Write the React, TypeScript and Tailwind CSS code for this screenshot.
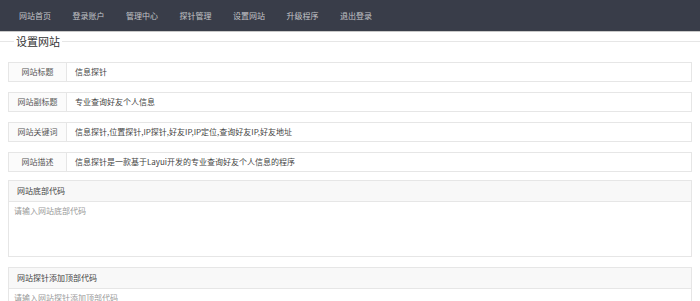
import React from "react"

const navItems = ["网站首页", "登录账户", "管理中心", "探针管理", "设置网站", "升级程序", "退出登录"]

const fields = [
  { label: "网站标题", value: "信息探针" },
  { label: "网站副标题", value: "专业查询好友个人信息" },
  { label: "网站关键词", value: "信息探针,位置探针,IP探针,好友IP,IP定位,查询好友IP,好友地址" },
  { label: "网站描述", value: "信息探针是一款基于Layui开发的专业查询好友个人信息的程序" },
]

const panels = [
  { title: "网站底部代码", placeholder: "请输入网站底部代码" },
  { title: "网站探针添加顶部代码", placeholder: "请输入网站探针添加顶部代码" },
]

export default function App() {
  return (
    <div
      className="w-[700px] h-[301px] overflow-hidden bg-white text-[#333]"
      style={{ fontFamily: '"Noto Sans CJK SC", "Noto Sans", sans-serif' }}
    >
      <div className="h-[32px] bg-[#393d49] flex items-center pl-[19px] gap-[21.5px] border-b border-[#c9c9c9]">
        {navItems.map((item) => (
          <span key={item} className="text-[8px] leading-none text-white/70">
            {item}
          </span>
        ))}
      </div>

      <div className="flex items-center h-[16px] mt-[1px]">
        <div className="w-[14px] h-px bg-[#e6e6e6]" />
        <span className="px-[2px] text-[11px] leading-none text-[#333]">设置网站</span>
        <div className="flex-1 h-px bg-[#e6e6e6]" />
      </div>

      <div className="mx-[8px] mt-[13px] flex flex-col gap-[10px]">
        {fields.map((f) => (
          <div key={f.label} className="flex h-[20px] border border-[#e6e6e6]">
            <div className="w-[58px] shrink-0 bg-[#fbfbfb] border-r border-[#e6e6e6] flex items-center justify-center text-[8px] text-[#555]">
              {f.label}
            </div>
            <div className="flex-1 flex items-center pl-[8px] text-[8px] text-[#444]">{f.value}</div>
          </div>
        ))}

        <div className="flex flex-col gap-[10px] mt-[-2px]">
          {panels.map((p) => (
            <div key={p.title} className="border border-[#e6e6e6]">
              <div className="h-[21px] bg-[#f8f8f8] border-b border-[#e6e6e6] flex items-center pl-[8px] text-[8px] text-[#444]">
                {p.title}
              </div>
              <div className="h-[54px] pl-[5px] pt-[3px] text-[8px] text-[#999]">{p.placeholder}</div>
            </div>
          ))}
        </div>
      </div>
    </div>
  )
}
